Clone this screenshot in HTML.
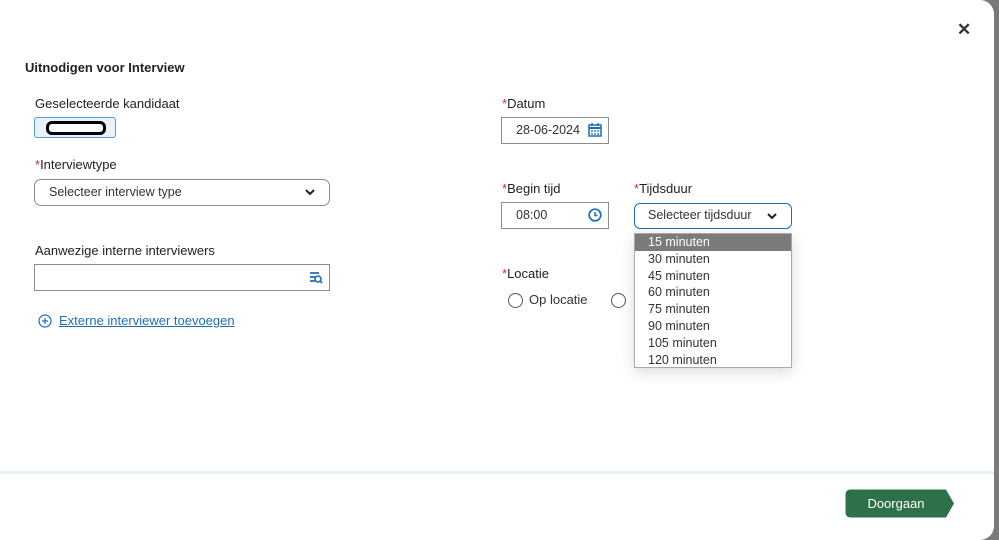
<!DOCTYPE html>
<html><head><meta charset="utf-8"><style>
body{margin:0;width:999px;height:540px;background:#7a7a7a;font-family:"Liberation Sans",sans-serif;overflow:hidden;position:relative}
.m{position:absolute;left:0;top:0;width:994px;height:540px;background:#fff;border-radius:0 14px 14px 0}
.a{position:absolute;font-size:13px;color:#222}
.req{color:#c0392b}
.box{position:absolute;border:1px solid #8c8c8c;background:#fff;box-sizing:border-box;font-size:12.5px;color:#333}
</style></head><body>
<div class="m">
<div class="a" style="left:957px;top:20px;font-size:17px;font-weight:bold;color:#333">✕</div>
<div class="a" style="left:25px;top:60px;font-weight:bold;font-size:13px;color:#222">Uitnodigen voor Interview</div>
<div class="a" style="left:35px;top:96px">Geselecteerde kandidaat</div>
<div style="position:absolute;left:34px;top:117px;width:82px;height:21px;border:1px solid #5b9bd5;border-radius:3px;background:#e8f2fb;box-sizing:border-box"><div style="position:absolute;left:11px;top:3px;width:54px;height:8px;border:3.5px solid #000;border-radius:6px;background:#fff"></div></div>
<div class="a" style="left:35px;top:157px"><span class="req">*</span>Interviewtype</div>
<div class="box" style="left:34px;top:179px;width:296px;height:27px;border-radius:7px;padding:5px 0 0 14px">Selecteer interview type<svg style="position:absolute;right:14px;top:9px" width="10" height="7"><path d="M1 1l4 4 4-4" stroke="#222" stroke-width="2" fill="none"/></svg></div>
<div class="a" style="left:35px;top:243px">Aanwezige interne interviewers</div>
<div class="box" style="left:34px;top:264px;width:296px;height:27px"><svg style="position:absolute;right:6px;top:6px" width="14" height="13"><path d="M1 2h9M1 6h5M1 10h5" stroke="#1f6fb5" stroke-width="1.8"/><circle cx="9" cy="8" r="3" stroke="#1f6fb5" stroke-width="1.6" fill="none"/><path d="M11 10l2 2" stroke="#1f6fb5" stroke-width="1.8"/></svg></div>
<svg style="position:absolute;left:38px;top:314px" width="14" height="14"><circle cx="7" cy="7" r="6" stroke="#1f6fb5" stroke-width="1.2" fill="none"/><path d="M7 4v6M4 7h6" stroke="#1f6fb5" stroke-width="1.2"/></svg>
<div class="a" style="left:59px;top:313px;color:#1f6fb5;text-decoration:underline">Externe interviewer toevoegen</div>

<div class="a" style="left:502px;top:96px"><span class="req">*</span>Datum</div>
<div class="box" style="left:501px;top:117px;width:108px;height:27px;padding:5px 0 0 14px">28-06-2024<svg style="position:absolute;right:6px;top:5px" width="14" height="14"><rect x="1" y="2" width="12" height="11" stroke="#1f6fb5" stroke-width="1.5" fill="none"/><path d="M1 5h12" stroke="#1f6fb5" stroke-width="2"/><path d="M4 0v3M10 0v3" stroke="#1f6fb5" stroke-width="1.5"/><path d="M3 8h2M6 8h2M9 8h2M3 11h2M6 11h2M9 11h2" stroke="#1f6fb5" stroke-width="1.3"/></svg></div>
<div class="a" style="left:502px;top:181px"><span class="req">*</span>Begin tijd</div>
<div class="box" style="left:501px;top:202px;width:108px;height:27px;padding:5px 0 0 14px">08:00<svg style="position:absolute;right:6px;top:5px" width="14" height="14"><circle cx="7" cy="7" r="5.8" stroke="#1f6fb5" stroke-width="1.7" fill="none"/><path d="M7 4v3.5h2.5" stroke="#1f6fb5" stroke-width="1.5" fill="none"/></svg></div>
<div class="a" style="left:634px;top:181px"><span class="req">*</span>Tijdsduur</div>
<div class="box" style="left:634px;top:203px;width:158px;height:26px;border:1.5px solid #1f6fb5;border-radius:6px;padding:4px 0 0 13px">Selecteer tijdsduur<svg style="position:absolute;right:14px;top:9px" width="10" height="7"><path d="M1 1l4 4 4-4" stroke="#222" stroke-width="2" fill="none"/></svg></div>
<div class="a" style="left:502px;top:266px"><span class="req">*</span>Locatie</div>
<div style="position:absolute;left:508px;top:293px;width:13px;height:13px;border:1px solid #555;border-radius:50%"></div>
<div class="a" style="left:529px;top:292px;color:#333">Op locatie</div>
<div style="position:absolute;left:611px;top:293px;width:13px;height:13px;border:1px solid #555;border-radius:50%"></div>
<div style="position:absolute;left:634px;top:233px;width:158px;height:135px;border:1px solid #aaa;background:#fff;box-sizing:border-box;box-shadow:0 4px 14px rgba(0,0,0,.15);font-size:12.5px;color:#333;line-height:16.8px">
<div style="background:#7b7b7b;color:#fff;padding-left:13px">15 minuten</div>
<div style="padding-left:13px">30 minuten</div><div style="padding-left:13px">45 minuten</div><div style="padding-left:13px">60 minuten</div><div style="padding-left:13px">75 minuten</div><div style="padding-left:13px">90 minuten</div><div style="padding-left:13px">105 minuten</div><div style="padding-left:13px">120 minuten</div></div>

<div style="position:absolute;left:0;top:471px;width:994px;height:3px;background:#e8f0f7"></div>
<svg style="position:absolute;left:845px;top:489px" width="110" height="29"><path d="M6 0.5H101L109 14.5L101 28.5H6Q0.5 28.5 0.5 23V6Q0.5 0.5 6 0.5Z" fill="#2e7048"/><text x="51" y="19" font-family="Liberation Sans" font-size="13" fill="#fff" text-anchor="middle">Doorgaan</text></svg>
</div>
</body></html>
